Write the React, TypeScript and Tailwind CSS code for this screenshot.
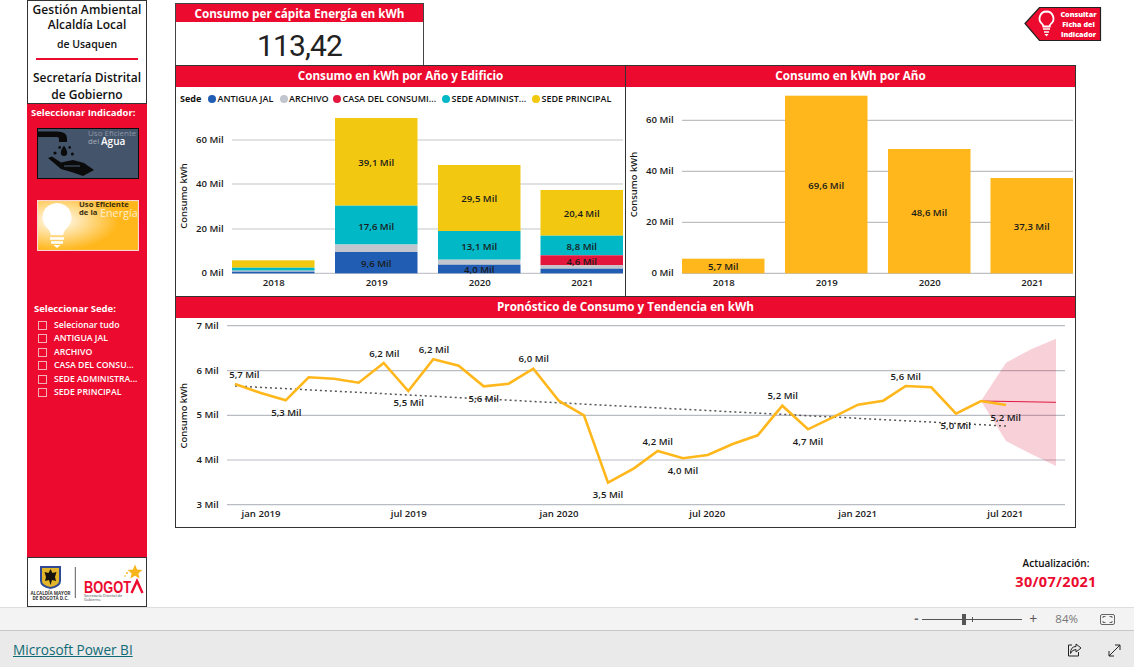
import React from "react";

const RED = "#EC0B2E";
const txt = { fontFamily: "'Open Sans',sans-serif", fontWeight: 600, fontSize: 9.6, fill: "#1a1a1a" } as const;

function Lbl({ x, y, t, anchor = "middle", size = 9.6 }: { x: number; y: number; t: string; anchor?: "middle" | "end" | "start"; size?: number }) {
  return <text x={x} y={y} textAnchor={anchor} dominantBaseline="central" style={{ ...txt, fontSize: size }}>{t}</text>;
}
function YTitle({ x, y }: { x: number; y: number }) {
  return <text transform={`translate(${x} ${y}) rotate(-90)`} textAnchor="middle" dominantBaseline="central" style={{ ...txt, fontSize: 9.4 }}>Consumo kWh</text>;
}
function Panel({ title, className, children }: { title: string; className: string; children: React.ReactNode }) {
  return (
    <section className={`border border-[#333] flex flex-col bg-white ${className}`}>
      <h2 className="h-[21px] bg-[#EC0B2E] text-white text-center font-bold text-[11.7px] leading-[18px] shrink-0">{title}</h2>
      {children}
    </section>
  );
}

const C = { y: "#F2C811", t: "#01B8C6", g: "#C0C5CE", r: "#E3173E", b: "#215DB3", o: "#FFB71C" };

type Seg = [number, number, string];
const stacks: { x: number; segs: Seg[]; yr: string; labels: [string, number][] }[] = [
  { x: 232, yr: "2018", segs: [[260.3, 267.7, C.y], [267.7, 270.7, C.t], [270.7, 271.7, C.g], [271.7, 273.3, C.b]], labels: [] },
  { x: 335, yr: "2019", segs: [[118, 205.7, C.y], [205.7, 244.5, C.t], [244.5, 252, C.g], [252, 273.3, C.b]], labels: [["39,1 Mil", 162.7], ["17,6 Mil", 226.7], ["9,6 Mil", 263.7]] },
  { x: 438, yr: "2020", segs: [[165, 231, C.y], [231, 259.7, C.t], [259.7, 264.7, C.g], [264.7, 273.3, C.b]], labels: [["29,5 Mil", 198.7], ["13,1 Mil", 246.7], ["4,0 Mil", 269.3]] },
  { x: 540.5, yr: "2021", segs: [[190, 235.7, C.y], [235.7, 255.3, C.t], [255.3, 265.3, C.r], [265.3, 268.7, C.g], [268.7, 273.3, C.b]], labels: [["20,4 Mil", 213.3], ["8,8 Mil", 246.7], ["4,6 Mil", 261.7]] },
];

const legend: [string, string, string][] = [
  ["ANTIGUA JAL", C.b, "w-[71.5px]"],
  ["ARCHIVO", C.g, "w-[53.5px]"],
  ["CASA DEL CONSUMI...", C.r, "w-[109px]"],
  ["SEDE ADMINIST...", C.t, "w-[90px]"],
  ["SEDE PRINCIPAL", C.y, "w-[84px]"],
];

function StackedChart() {
  return (
    <svg width={449} height={184} viewBox="176 111 449 184" className="block">
      {[[140, "60 Mil"], [184, "40 Mil"], [229, "20 Mil"], [273.3, "0 Mil"]].map(([y, t]) => (
        <g key={t as string}>
          <line x1={232} x2={623} y1={y as number} y2={y as number} stroke="#c4c6ca" strokeWidth={1.2} />
          <Lbl x={223.7} y={(y as number) - 0.5} t={t as string} anchor="end" />
        </g>
      ))}
      <YTitle x={183.5} y={196} />
      {stacks.map((s) => (
        <g key={s.yr}>
          {s.segs.map(([a, b, c]) => <rect key={a} x={s.x} y={a} width={82.5} height={b - a} fill={c} />)}
          {s.labels.map(([t, y]) => <Lbl key={t} x={s.x + 41.2} y={y} t={t} />)}
          <Lbl x={s.x + 41.7} y={282.7} t={s.yr} />
        </g>
      ))}
    </svg>
  );
}

function YearChart() {
  const bars = [
    { x: 682, top: 258.7, t: "5,7 Mil", ly: 266.7, yr: "2018" },
    { x: 785, top: 95.7, t: "69,6 Mil", ly: 185.7, yr: "2019" },
    { x: 888, top: 149, t: "48,6 Mil", ly: 212.7, yr: "2020" },
    { x: 990.5, top: 178, t: "37,3 Mil", ly: 226.7, yr: "2021" },
  ];
  return (
    <svg width={449} height={208} viewBox="626 87 449 208" className="block">
      {[[120.3, "60 Mil"], [171.3, "40 Mil"], [222.3, "20 Mil"], [273.3, "0 Mil"]].map(([y, t]) => (
        <g key={t as string}>
          <line x1={682} x2={1073} y1={y as number} y2={y as number} stroke="#adb0b4" strokeWidth={1} />
          <Lbl x={673.7} y={(y as number) - 1} t={t as string} anchor="end" />
        </g>
      ))}
      <YTitle x={633.5} y={184.6} />
      {bars.map((b) => (
        <g key={b.yr}>
          <rect x={b.x} y={b.top} width={82.5} height={273.3 - b.top} fill={C.o} />
          <Lbl x={b.x + 41.2} y={b.ly} t={b.t} />
          <Lbl x={b.x + 41.7} y={282.7} t={b.yr} />
        </g>
      ))}
    </svg>
  );
}

const line = [
  [235, 384], [260, 392.7], [285.7, 400.3], [308.7, 377.3], [334, 378.7], [358.7, 382.7], [383.7, 363], [408.3, 391], [433.3, 359.3], [458.7, 365.7],
  [483.7, 386.3], [508.7, 383.7], [533.3, 368.7], [559, 401], [584, 415.3], [608, 482.7], [634, 468.3], [657.7, 451], [683, 458.3], [707.7, 455],
  [732.7, 444], [757.7, 435.3], [782.3, 405.7], [808, 429.3], [832.7, 417.3], [858, 404.7], [883.3, 400.7], [905.7, 386], [931.3, 387.3], [956, 413.7], [981, 401], [1006, 405],
];
const ptLabels: [number, number, string][] = [
  [244.3, 374.7, "5,7 Mil"], [286.3, 412.7, "5,3 Mil"], [384.3, 353.7, "6,2 Mil"], [408.7, 402.7, "5,5 Mil"], [434, 349.3, "6,2 Mil"], [483.7, 398.7, "5,6 Mil"],
  [533.7, 358.3, "6,0 Mil"], [608, 494.3, "3,5 Mil"], [657.7, 441.7, "4,2 Mil"], [683, 470.3, "4,0 Mil"], [782.7, 395.7, "5,2 Mil"], [808, 441.7, "4,7 Mil"],
  [905.7, 376.7, "5,6 Mil"], [955.7, 425.7, "5,0 Mil"], [1005.7, 417.3, "5,2 Mil"],
];

function ForecastChart() {
  return (
    <svg width={899} height={209} viewBox="176 318 899 209" className="block">
      {[[325.7, "7 Mil"], [370.7, "6 Mil"], [415.3, "5 Mil"], [460, "4 Mil"], [504.7, "3 Mil"]].map(([y, t]) => (
        <g key={t as string}>
          <line x1={227} x2={1065} y1={y as number} y2={y as number} stroke="#b9bcc2" strokeWidth={1.2} />
          <Lbl x={218.7} y={(y as number) - 0.5} t={t as string} anchor="end" />
        </g>
      ))}
      <YTitle x={183.5} y={415.7} />
      <polygon points="981,401 1006,362.7 1031.7,349 1056,338.7 1056,466 1031.7,454.3 1006,441" fill="#D9163A" fillOpacity={0.2} />
      <line x1={981} y1={401} x2={1056} y2={402.3} stroke="#E3173E" strokeWidth={1} />
      <line x1={235} y1={386} x2={1006} y2={426} stroke="#555" strokeWidth={1.5} strokeDasharray="2 3" />
      <polyline points={line.map((p) => p.join(",")).join(" ")} fill="none" stroke={C.o} strokeWidth={2.6} strokeLinejoin="miter" />
      {ptLabels.map(([x, y, t]) => <Lbl key={x} x={x} y={y} t={t} />)}
      {[[261, "jan 2019"], [408.7, "jul 2019"], [559, "jan 2020"], [707.3, "jul 2020"], [857.7, "jan 2021"], [1005.3, "jul 2021"]].map(([x, t]) => (
        <Lbl key={t as string} x={x as number} y={513.7} t={t as string} />
      ))}
    </svg>
  );
}

function WaterTile() {
  return (
    <svg width={102} height={51} viewBox="0 0 102 51" className="block ml-[10px] mt-[8px]">
      <rect x={0.5} y={0.5} width={101} height={50} fill="#44546A" stroke="#0b0b0b" strokeWidth={1} />
      <path d="M0 3.500H20Q30 3.500 30 10V14H22V11Q22 9 20 9H0Z" fill="#0b0b0b" />
      <path d="M27 17.500q3.200 4.500 3.200 7.300a3.200 3.200 0 1 1-6.400 0q0-2.800 3.200-7.300z" fill="#0b0b0b" />
      <circle cx={22.700} cy={19.400} r={1.3} fill="#0b0b0b" />
      <circle cx={32.700} cy={19.400} r={1.3} fill="#0b0b0b" />
      <circle cx={18} cy={25} r={1.6} fill="#0b0b0b" />
      <circle cx={35.400} cy={26} r={1.5} fill="#0b0b0b" />
      <path d="M11 30L15 28.500L24 34.500L36 32L47 35L57 42L46 48L36 44.500L24 41Z" fill="#0b0b0b" />
      <path d="M27 38H43" stroke="#44546A" strokeWidth={1.2} />
      <text x={51} y={7.500} style={{ fontFamily: "'Open Sans',sans-serif", fontSize: 8, fill: "#8d96a6" }}>Uso Eficiente</text>
      <text x={51} y={16} style={{ fontFamily: "'Open Sans',sans-serif", fontSize: 7.8, fill: "#a6aebb" }}>del</text>
      <text x={64} y={17} style={{ fontFamily: "'Open Sans',sans-serif", fontWeight: 600, fontSize: 10, fill: "#fff" }}>Agua</text>
    </svg>
  );
}

function EnergyTile() {
  return (
    <svg width={102} height={51} viewBox="0 0 102 51" className="block ml-[10px] mt-[21px]">
      <defs>
        <radialGradient id="eg" cx="20%" cy="40%" r="60%">
          <stop offset="0%" stopColor="#fff" />
          <stop offset="30%" stopColor="#ffe9b8" />
          <stop offset="100%" stopColor="#FFB71C" />
        </radialGradient>
      </defs>
      <rect x={0.5} y={0.5} width={101} height={50} fill="url(#eg)" stroke="#f9d5d5" strokeWidth={1.2} />
      <path d="M20 3a14.500 14.500 0 0 1 9.500 25.500q-3 2.500-3.500 6.500h-12q-.5-4-3.500-6.500A14.500 14.500 0 0 1 20 3z" fill="#fff" />
      <path d="M13 38.500H27M14 42.500H26" stroke="#fff" strokeWidth={2.4} />
      <path d="M16.500 45H23.500L20 48Z" fill="#fff" />
      <text x={42} y={7} style={{ fontFamily: "'Open Sans',sans-serif", fontWeight: 700, fontSize: 7.7, fill: "#3b2e10" }}>Uso Eficiente</text>
      <text x={42} y={15} style={{ fontFamily: "'Open Sans',sans-serif", fontWeight: 700, fontSize: 7.7, fill: "#3b2e10" }}>de la</text>
      <text x={63} y={17} style={{ fontFamily: "'Open Sans',sans-serif", fontSize: 10.8, fill: "#ffeecb" }}>Energía</text>
    </svg>
  );
}

function LogoBlock() {
  return (
    <svg width={117} height={48} viewBox="28 558 117 48" className="block">
      <path d="M40 566H61V581Q61 587 50.500 589Q40 587 40 581Z" fill="#2f4a92" />
      <path d="M42 568H59V581Q59 585 50.500 587Q42 585 42 581Z" fill="#e3b52b" />
      <path d="M50.500 569l2 4 4-1-1.500 5 1 4-4-1-1.500 5-1.500-5-4 1 1-4-1.500-5 4 1z" fill="#17140e" />
      <text x={50.500} y={595} textAnchor="middle" style={{ fontFamily: "'Open Sans',sans-serif", fontWeight: 700, fontSize: 4.5, fill: "#333" }}>ALCALDÍA MAYOR</text>
      <text x={50.500} y={600} textAnchor="middle" style={{ fontFamily: "'Open Sans',sans-serif", fontWeight: 700, fontSize: 4.5, fill: "#333" }}>DE BOGOTÁ D.C.</text>
      <line x1={75.300} x2={75.300} y1={567} y2={598} stroke="#333" strokeWidth={0.8} />
      <text x={84} y={592.500} textLength={47} lengthAdjust="spacingAndGlyphs" style={{ fontFamily: "'Liberation Sans',sans-serif", fontWeight: 700, fontSize: 16.5, fill: RED }}>BOGOT</text>
      <path d="M131.500 593L137 581L142.500 593" fill="none" stroke={RED} strokeWidth={2.4} />
      <path d="M135 564.500l2.100 5 5.300.4-4 3.500 1.200 5.200-4.600-2.800-4.600 2.800 1.200-5.200-4-3.500 5.300-.4z" fill="#F8B41C" />
      <circle cx={127} cy={573} r={1} fill="#F8B41C" />
      <circle cx={125} cy={576} r={0.8} fill="#F8B41C" />
      <text x={84} y={597} style={{ fontFamily: "'Open Sans',sans-serif", fontSize: 3.8, fill: "#444" }}>Secretaría Distrital de</text>
      <text x={84} y={601} style={{ fontFamily: "'Open Sans',sans-serif", fontSize: 3.8, fill: "#444" }}>Gobierno</text>
    </svg>
  );
}

function ConsultBadge() {
  const s = { fontFamily: "'Open Sans',sans-serif", fontWeight: 800, fontSize: 7.2, fill: "#fff" };
  return (
    <svg width={78} height={36} viewBox="1024.500 6 78 36" className="block mt-[3px]">
      <polygon points="1025.500,23.500 1040,7.500 1101,7.500 1101,40.500 1040,40.500" fill={RED} stroke="#222" strokeWidth={1.2} />
      <path d="M1047 11.500a7 7 0 0 1 4.400 12.400q-1.200 1-1.200 2.600h-6.400q0-1.600-1.200-2.600A7 7 0 0 1 1047 11.500z" fill="none" stroke="#fff" strokeWidth={1.8} />
      <path d="M1043.500 29H1050.500M1044.500 32H1049.500" stroke="#fff" strokeWidth={1.3} />
      <path d="M1045 34H1049L1047 36.500Z" fill="#fff" />
      <text x={1079} y={16.500} textAnchor="middle" style={s}>Consultar</text>
      <text x={1079} y={26.500} textAnchor="middle" style={s}>Ficha del</text>
      <text x={1079} y={36.500} textAnchor="middle" style={s}>Indicador</text>
    </svg>
  );
}

const sedes = ["Selecionar tudo", "ANTIGUA JAL", "ARCHIVO", "CASA DEL CONSU...", "SEDE ADMINISTRA...", "SEDE PRINCIPAL"];

export default function App() {
  return (
    <div className="w-[1134px] h-[667px] flex flex-col overflow-hidden bg-white font-['Open_Sans',sans-serif] text-[#111]">
      <div className="flex h-[607px] shrink-0">
        <aside className="ml-[27px] w-[120px] bg-[#EC0B2E] flex flex-col shrink-0">
          <div className="h-[104px] bg-white border border-[#333] text-center font-semibold text-[#111] shrink-0">
            <p className="text-[12px] leading-[15px] mt-[1px] tracking-[0.1px]">Gestión Ambiental</p>
            <p className="text-[12px] leading-[15px]">Alcaldía Local</p>
            <p className="text-[10.5px] leading-[14px] mt-[5px]">de Usaquen</p>
            <div className="h-[2px] w-[102px] mx-auto mt-[7px] bg-[#EC0B2E]" />
            <p className="text-[12px] leading-[17px] mt-[9px]">Secretaría Distrital</p>
            <p className="text-[12px] leading-[17px]">de Gobierno</p>
          </div>
          <p className="text-white font-bold text-[9.5px] leading-[14px] mt-[2px] ml-[4px] whitespace-nowrap">Seleccionar Indicador:</p>
          <WaterTile />
          <EnergyTile />
          <p className="text-white font-bold text-[9.5px] leading-[14px] mt-[51px] ml-[7px]">Seleccionar Sede:</p>
          <ul className="mt-[2.5px] ml-[11px] flex flex-col">
            {sedes.map((s) => (
              <li key={s} className="h-[13.5px] flex items-center gap-[7px] text-white text-[8.7px] font-semibold whitespace-nowrap">
                <span className="w-[9px] h-[9px] border border-[#f4b0b8] shrink-0" />
                {s}
              </li>
            ))}
          </ul>
          <div className="mt-auto h-[50px] bg-white border border-[#333] shrink-0">
            <LogoBlock />
          </div>
        </aside>

        <main className="ml-[28px] w-[927px] flex flex-col pt-[3px] shrink-0">
          <div className="flex justify-between items-start h-[62px] shrink-0">
            <div className="w-[249px] h-[63px] border border-[#444] flex flex-col">
              <h2 className="h-[21px] bg-[#EC0B2E] text-white text-center font-bold text-[11.7px] leading-[18px]">Consumo per cápita Energía en kWh</h2>
              <p className="text-center text-[30px] leading-[48px] font-['Roboto',sans-serif] font-normal text-[#222] tracking-[-0.9px]">113,42</p>
            </div>
            <ConsultBadge />
          </div>
          <div className="flex w-[901px] h-[232px] shrink-0">
            <Panel title="Consumo en kWh por Año y Edificio" className="w-[451px] h-[232px]">
              <div className="h-[24px] flex items-center pl-[4px] text-[9px] font-semibold whitespace-nowrap shrink-0">
                <span className="font-bold w-[28px]">Sede</span>
                {legend.map(([t, c, w]) => (
                  <span key={t} className={`flex items-center gap-[1.5px] ${w}`}>
                    <span className="w-[8px] h-[8px] rounded-full shrink-0" style={{ background: c }} />
                    {t}
                  </span>
                ))}
              </div>
              <StackedChart />
            </Panel>
            <Panel title="Consumo en kWh por Año" className="w-[451px] h-[232px] -ml-px">
              <YearChart />
            </Panel>
          </div>
          <Panel title="Pronóstico de Consumo y Tendencia en kWh" className="w-[901px] h-[232px] -mt-px shrink-0">
            <ForecastChart />
          </Panel>
          <div className="self-end w-[92px] mt-[29px] text-center">
            <p className="text-[10px] leading-[13px] font-semibold whitespace-nowrap">Actualización:</p>
            <p className="text-[14.5px] leading-[20px] mt-[2px] font-bold text-[#EC0B2E] tracking-[0.3px] whitespace-nowrap">30/07/2021</p>
          </div>
        </main>
      </div>

      <div className="h-[24px] bg-[#f3f3f3] border-t border-b border-t-[#dedede] border-b-[#c8c8c8] flex items-center justify-end shrink-0 text-[#666]">
        <span className="text-[13px] font-bold leading-none mr-[4px] -mt-[2px]">-</span>
        <div className="relative w-[100px] h-px bg-[#555] mr-[7px]">
          <span className="absolute left-[40px] -top-[5px] w-[4px] h-[11px] bg-[#555]" />
          <span className="absolute left-[50px] -top-[2px] w-px h-[5px] bg-[#555]" />
        </div>
        <span className="text-[14px] leading-none mr-[18px] text-[#555]">+</span>
        <span className="text-[11.5px] text-[#777] mr-[22px]">84%</span>
        <svg width={15} height={11} viewBox="0 0 15 11" className="mr-[19px]" fill="none" stroke="#666">
          <rect x={0.5} y={0.5} width={14} height={10} rx={1.5} />
          <path d="M3 4V2.500H5.500M12 4V2.500H9.500M3 7V8.500H5.500M12 7V8.500H9.500" />
        </svg>
      </div>
      <div className="flex-1 bg-[#eaeaea] flex items-center pl-[13px] pr-[13px] pt-[2px]">
        <a href="#" className="text-[13.6px] leading-none text-[#0f6b75] underline">Microsoft Power BI</a>
        <svg width={15} height={14} viewBox="0 0 15 14" className="ml-auto" fill="none" stroke="#222" strokeWidth={1}>
          <path d="M5 2H1.500V13H11.500V9" />
          <path d="M9 1L14 5L9 9V6.500Q5 6.500 3.500 10.500Q3.500 3.500 9 3.500Z" />
        </svg>
        <svg width={13} height={13} viewBox="0 0 13 13" className="ml-[26px]" fill="none" stroke="#222" strokeWidth={1}>
          <path d="M1 12L12 1M7 1H12V6M1 7V12H6" />
        </svg>
      </div>
    </div>
  );
}
